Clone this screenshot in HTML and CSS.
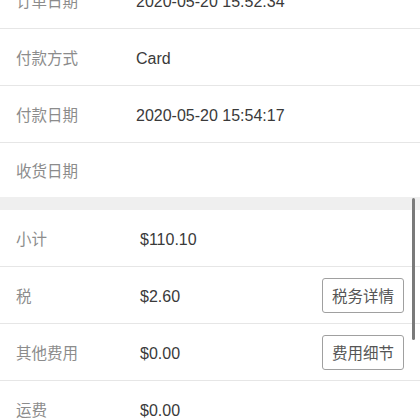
FILE: index.html
```html
<!DOCTYPE html>
<html lang="zh-CN">
<head>
    <meta charset="UTF-8">
    <meta name="viewport" content="width=device-width, initial-scale=1.0">
    <title>订单详情</title>
    <link rel="stylesheet" href="styles.css">
</head>
<body>
    <div class="page">
        <div class="section info">
            <div class="row"><span class="label">订单日期</span><span class="value">2020-05-20 15:52:34</span></div>
            <div class="row"><span class="label">付款方式</span><span class="value">Card</span></div>
            <div class="row"><span class="label">付款日期</span><span class="value">2020-05-20 15:54:17</span></div>
            <div class="row last"><span class="label">收货日期</span><span class="value"></span></div>
        </div>

        <div class="gap"></div>

        <div class="section totals">
            <div class="row"><span class="label">小计</span><span class="value">$110.10</span></div>
            <div class="row"><span class="label">税</span><span class="value">$2.60</span><button class="detail">税务详情</button></div>
            <div class="row"><span class="label">其他费用</span><span class="value">$0.00</span><button class="detail">费用细节</button></div>
            <div class="row"><span class="label">运费</span><span class="value">$0.00</span></div>
        </div>
    </div>

    <div class="scrollbar"></div>
</body>
</html>
```

FILE: styles.css
```css
body {
    margin: 0;
    background: #fff;
    font-family: "Liberation Sans", "Noto Sans CJK SC", sans-serif;
    overflow: hidden;
}
.page {
    margin-top: -28px;
}
.row {
    display: flex;
    align-items: center;
    height: 56px;
    padding: 0 16px;
    border-bottom: 1px solid #e6e6e6;
}
.row.last {
    height: 54px;
    border-bottom: none;
}
.label {
    width: 120px;
    flex-shrink: 0;
    font-family: "Noto Sans CJK SC", sans-serif;
    font-size: 15.5px;
    color: #8c8c8c;
}
.totals .label {
    width: 124px;
}
.value {
    flex: 1;
    padding-top: 3px;
    font-size: 16px;
    color: #3a3a3a;
}
.gap {
    height: 13px;
    background: #efefef;
}
.detail {
    width: 82px;
    height: 35px;
    padding: 0;
    background: #fff;
    border: 1px solid #a0a0a0;
    border-radius: 3px;
    font-family: "Noto Sans CJK SC", sans-serif;
    font-size: 15.5px;
    color: #555;
}
.scrollbar {
    position: absolute;
    left: 412px;
    top: 198px;
    width: 3px;
    height: 142px;
    border-radius: 2px;
    background: #7a7a7a;
}
```
